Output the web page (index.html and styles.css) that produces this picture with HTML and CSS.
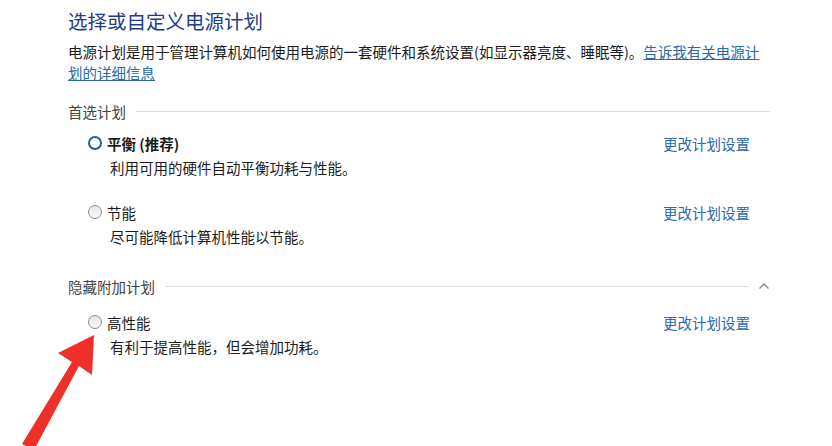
FILE: index.html
```html
<!DOCTYPE html>
<html lang="zh-CN">
<head>
    <meta charset="UTF-8">
    <title>电源选项</title>
    <link rel="stylesheet" href="styles.css">
</head>
<body>
    <div class="power-page">
        <h1 class="page-title">选择或自定义电源计划</h1>
        <p class="page-desc">电源计划是用于管理计算机如何使用电源的一套硬件和系统设置(如显示器亮度、睡眠等)。<a href="#" class="link">告诉我有关电源计划的详细信息</a></p>

        <!-- 首选计划 -->
        <div class="section-header first">
            <span>首选计划</span>
            <div class="section-line"></div>
        </div>

        <div class="plan">
            <div class="plan-row">
                <label class="plan-name selected-name">
                    <span class="radio checked"></span>平衡 (推荐)
                </label>
                <a href="#" class="plan-link">更改计划设置</a>
            </div>
            <div class="plan-desc">利用可用的硬件自动平衡功耗与性能。</div>
        </div>

        <div class="plan">
            <div class="plan-row">
                <label class="plan-name">
                    <span class="radio"></span>节能
                </label>
                <a href="#" class="plan-link">更改计划设置</a>
            </div>
            <div class="plan-desc">尽可能降低计算机性能以节能。</div>
        </div>

        <!-- 隐藏附加计划 -->
        <div class="section-header extra">
            <span>隐藏附加计划</span>
            <div class="section-line"></div>
            <svg class="chevron" width="12" height="8" viewBox="0 0 12 8">
                <polyline points="1.5,6.5 6,2 10.5,6.5" fill="none" stroke="#8a8a8a" stroke-width="1.4"/>
            </svg>
        </div>

        <div class="plan">
            <div class="plan-row">
                <label class="plan-name">
                    <span class="radio"></span>高性能
                </label>
                <a href="#" class="plan-link">更改计划设置</a>
            </div>
            <div class="plan-desc">有利于提高性能，但会增加功耗。</div>
        </div>
    </div>

    <!-- annotation arrow -->
    <svg class="arrow" width="120" height="120" viewBox="0 326 120 120">
        <polygon points="94,335 58,353 72,362 22,444 34,450 79,366 92,375" fill="#ee2f2a"/>
    </svg>
</body>
</html>
```

FILE: styles.css
```css
:root {
    --title: #1e3c8a;
    --link: #2b68ad;
    --text: #1b1b1b;
    --muted: #444;
    --line: #dcdcdc;
}

body {
    margin: 0;
    background: #fff;
    font-family: "Noto Sans CJK SC", "Noto Sans", sans-serif;
    color: var(--text);
    font-size: 14.5px;
}

.power-page {
    width: 702px;
    padding: 8px 0 0 68px;
}

.page-title {
    margin: 0;
    font-size: 19.5px;
    font-weight: 400;
    line-height: 26px;
    color: var(--title);
}

.page-desc {
    margin: 7px 0 0;
    width: 700px;
    line-height: 21px;
}

.link {
    color: var(--link);
    text-decoration: underline;
}

.section-header {
    display: flex;
    align-items: center;
    gap: 10px;
    height: 22px;
    color: var(--muted);
}

.section-header.first {
    margin-top: 17px;
    margin-bottom: 9px;
}

.section-header.extra {
    margin-top: 26px;
    margin-bottom: 13px;
}

.section-line {
    flex: 1;
    height: 1px;
    background: var(--line);
}

.plan {
    padding: 0 20px 0 20px;
    margin-bottom: 20px;
}

.plan-row {
    display: flex;
    justify-content: space-between;
    align-items: center;
    height: 24px;
}

.plan-name {
    display: flex;
    align-items: center;
    gap: 5px;
}

.selected-name {
    font-weight: 700;
}

.radio {
    width: 14px;
    height: 14px;
    box-sizing: border-box;
    border-radius: 50%;
    border: 1px solid #8c8c8c;
    background: linear-gradient(#e6e6e6, #fafafa);
}

.radio.checked {
    border: 2.8px solid #1b5fb3;
    background: #fff;
}

.plan-link {
    color: var(--link);
    text-decoration: none;
}

.plan-desc {
    margin: 1px 0 0 22px;
    line-height: 24px;
}

.arrow {
    position: absolute;
    left: 0;
    top: 326px;
}
```
